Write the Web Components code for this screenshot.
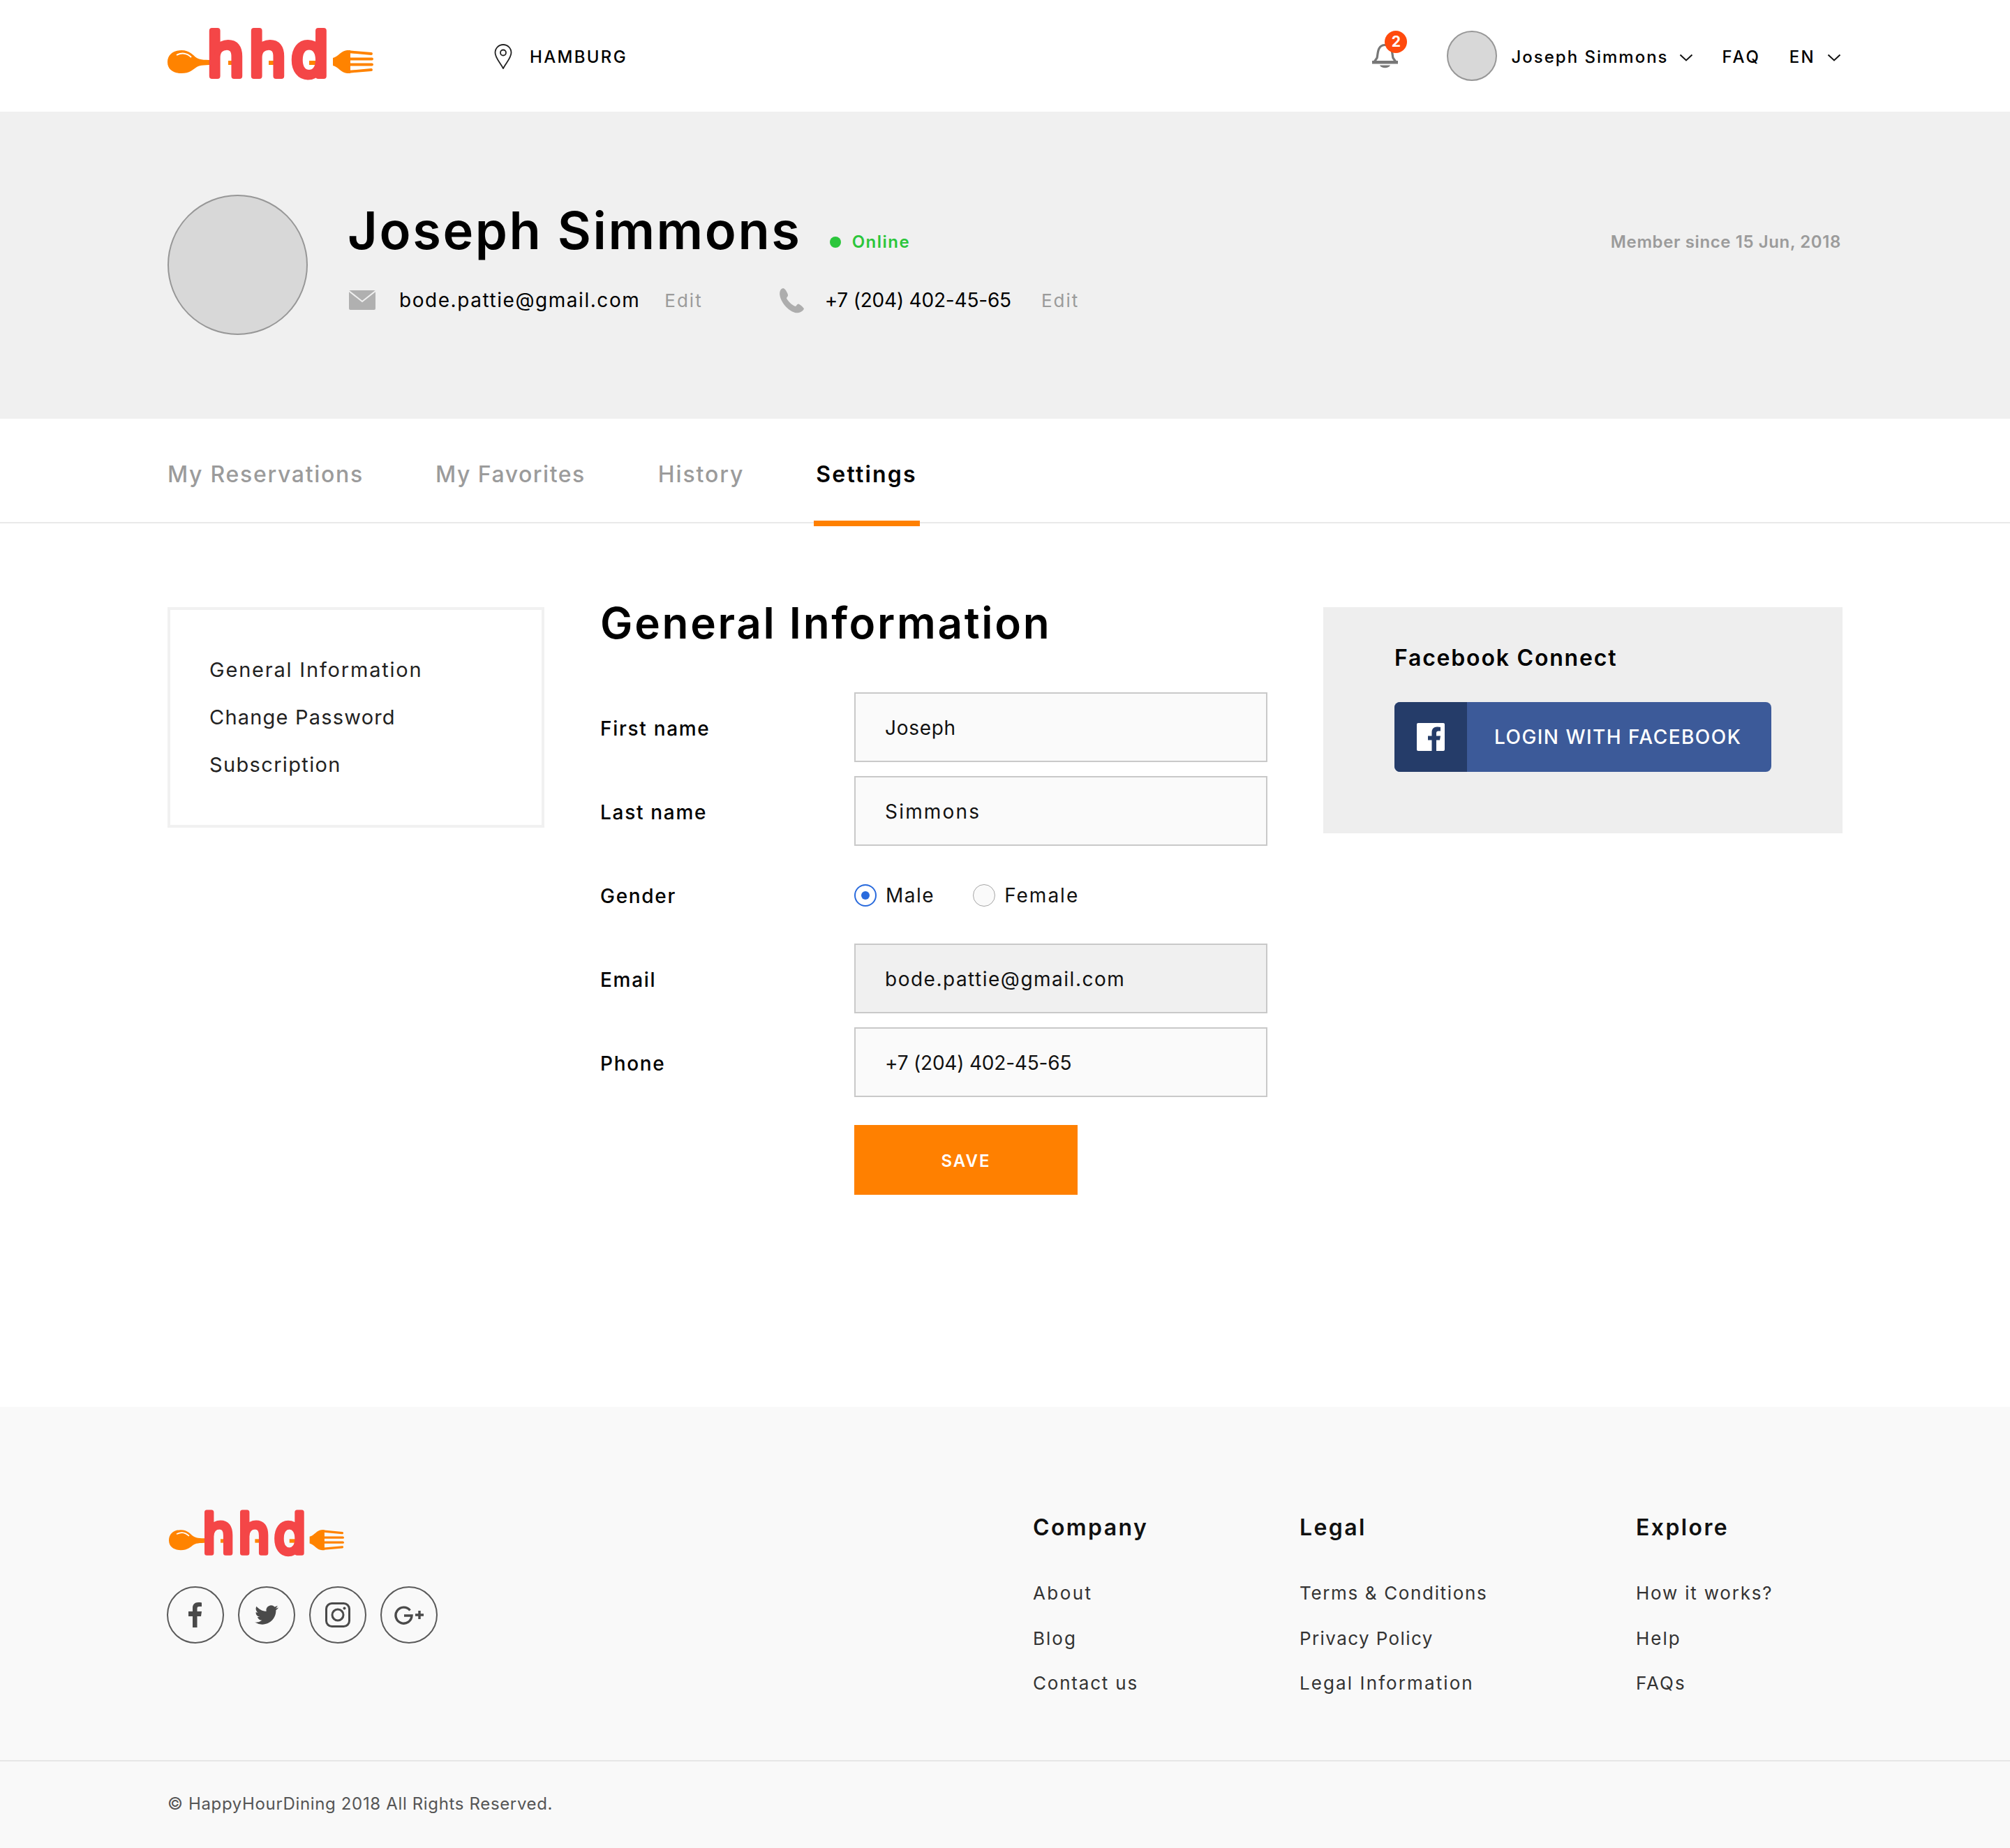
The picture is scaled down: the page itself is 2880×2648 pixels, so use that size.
<!DOCTYPE html>
<html lang="en">
<head>
<meta charset="utf-8">
<title>Settings</title>
<style>
    html, body { margin: 0; background: #fff; }
    body { font-family: Inter, "Liberation Sans", sans-serif; color: #000; width: 2880px; }
</style>
</head>
<body>
<site-header></site-header>
<profile-banner></profile-banner>
<account-tabs></account-tabs>
<settings-page>
    <settings-menu slot="menu"></settings-menu>
    <general-form slot="form"></general-form>
    <fb-connect slot="aside"></fb-connect>
</settings-page>
<site-footer></site-footer>

<script>
class HhdLogo extends HTMLElement {
    connectedCallback() {
        const ancho = this.getAttribute("ancho") || 295;
        const alto = this.getAttribute("alto") || 75;
        this.attachShadow({ mode: "open" }).innerHTML = `
            <style>:host { display: block; line-height: 0; } svg { overflow: visible; }</style>
            <svg width="${ancho}" height="${alto}" viewBox="0 0 295 75" preserveAspectRatio="none">
                <path fill="#ff8300" d="M0 49C0 38 9 32 20 32C32 32 36 39 42 43C47 46 54 46 70 46V53C54 53 47 53 42 56C36 60 32 65 20 65C9 65 0 60 0 49Z"/>
                <path fill="none" stroke="#fff" stroke-width="2" d="M13 39C20 35 28 36 34 42"/>
                <rect x="87" y="47" width="14" height="6" fill="#ff8300"/>
                <rect x="145" y="47" width="16" height="6" fill="#ff8300"/>
                <rect x="203" y="47" width="12" height="6" fill="#ff8300"/>
                <!-- la palabra sigue siendo texto: el trazo grueso le da las puntas redondas -->
                <text x="56 116 177" y="69" font-family="'DejaVu Sans', sans-serif" font-weight="400" font-size="86"
                    fill="#f44647" stroke="#f44647" stroke-width="8" stroke-linejoin="round">hhd</text>
                <path fill="#ff8300" d="M237 43C245 41 249 32 258 32H262V65H258C249 65 245 56 237 54Z"/>
                <g stroke="#ff8300" stroke-width="3.800" stroke-linecap="round">
                    <path d="M258 34L292 37"/><path d="M258 44.500H293"/><path d="M258 52.500H293"/><path d="M258 63L292 60"/>
                </g>
            </svg>
        `;
    }
}
customElements.define("hhd-logo", HhdLogo);

class SiteHeader extends HTMLElement {
    connectedCallback() {
        const chevron = `<svg class="chev" width="20" height="11" viewBox="0 0 20 11"><path d="M1.500 1.500L10 9.500L18.500 1.500" fill="none" stroke="#111" stroke-width="2"/></svg>`;
        this.attachShadow({ mode: "open" }).innerHTML = `
            <style>
                :host { display: flex; align-items: center; height: 160px; padding: 2px 242px 0 240px; box-sizing: border-box; background: #fff; font-size: 24px; font-weight: 500; }
                hhd-logo { margin-top: -7px; }
                .ciudad { display: flex; align-items: center; gap: 25px; margin-left: 173px; letter-spacing: 2.300px; }
                .derecha { display: flex; align-items: center; margin-left: auto; }
                .campana { position: relative; width: 37px; height: 36px; margin-right: 70px; margin-top: -2px; }
                .badge { position: absolute; left: 18px; top: -18px; width: 32px; height: 32px; border-radius: 50%; background: #ff4a0d; color: #fff; font-size: 21px; font-weight: 700; line-height: 32px; text-align: center; }
                .avatar { width: 72px; height: 72px; box-sizing: border-box; border-radius: 50%; background: #d8d8d8; border: 2px solid #979797; margin-right: 20px; margin-top: -2px; }
                .usuario { letter-spacing: 2px; }
                .chev { display: block; margin-top: 3px; }
                .faq { margin-left: 42px; letter-spacing: 2.900px; }
                .idioma { margin-left: 41px; letter-spacing: 2.300px; margin-right: 17px; }
            </style>
            <hhd-logo></hhd-logo>
            <div class="ciudad">
                <svg width="26" height="36" viewBox="0 0 26 36"><path d="M13 35C9 27 1.500 20 1.500 12.500C1.500 6 6.500 1 13 1S24.500 6 24.500 12.500C24.500 20 17 27 13 35Z" fill="none" stroke="#222" stroke-width="1.800"/><circle cx="13" cy="12.500" r="4" fill="none" stroke="#222" stroke-width="1.800"/></svg>
                <span>HAMBURG</span>
            </div>
            <div class="derecha">
                <div class="campana">
                    <svg width="37" height="36" viewBox="0 0 37 36"><path d="M3.500 26L7 21C8.500 16 7 2.500 18.500 2.500S28.500 16 30 21L33.500 26" fill="none" stroke="#777" stroke-width="3.200"/><rect x="0" y="25" width="37" height="4.500" fill="#777"/><path d="M11 31.500C13 36.500 24 36.500 26 31.500Z" fill="#777"/></svg>
                    <div class="badge">2</div>
                </div>
                <div class="avatar"></div>
                <span class="usuario">Joseph Simmons</span>
                <span style="margin-left:15px">${chevron}</span>
                <span class="faq">FAQ</span>
                <span class="idioma">EN</span>
                ${chevron}
            </div>
        `;
    }
}
customElements.define("site-header", SiteHeader);

class ProfileBanner extends HTMLElement {
    connectedCallback() {
        this.attachShadow({ mode: "open" }).innerHTML = `
            <style>
                :host { display: flex; gap: 60px; box-sizing: border-box; height: 440px; padding: 119px 242px 0 240px; background: #f0f0f0; }
                .avatar { flex: none; width: 201px; height: 201px; box-sizing: border-box; border-radius: 50%; background: #d8d8d8; border: 2px solid #979797; }
                .info { flex: 1; padding-top: 7px; margin-left: -1px; }
                .nombre { display: flex; align-items: flex-start; height: 88px; }
                h1 { margin: 0 0 0 -2px; font-size: 74px; line-height: 88px; font-weight: 600; letter-spacing: 2.600px; }
                .online { display: flex; align-items: center; margin: 46px 0 0 40px; color: #2bc63b; font-size: 24px; line-height: 30px; font-weight: 600; letter-spacing: 1.500px; }
                .punto { width: 16px; height: 16px; border-radius: 50%; background: #2bc63b; margin-right: 16px; }
                .desde { margin: 46px 0 0 auto; color: #9b9b9b; font-size: 24px; line-height: 30px; font-weight: 600; letter-spacing: .6px; }
                .contacto { display: flex; align-items: center; height: 40px; margin-top: 36px; font-size: 28px; }
                .editar { color: #9b9b9b; font-size: 26px; letter-spacing: 2px; margin-left: 35px; }
            </style>
            <div class="avatar"></div>
            <div class="info">
                <div class="nombre">
                    <h1>Joseph Simmons</h1>
                    <div class="online"><span class="punto"></span><span>Online</span></div>
                    <div class="desde">Member since 15 Jun, 2018</div>
                </div>
                <div class="contacto">
                    <svg width="38" height="28" viewBox="0 0 38 28"><rect width="38" height="28" rx="2" fill="#b0b0b0"/><path d="M0 1L19 16L38 1" fill="none" stroke="#f0f0f0" stroke-width="2"/></svg>
                    <span style="margin-left:34px;letter-spacing:1.550px">bode.pattie@gmail.com</span>
                    <span class="editar">Edit</span>
                    <svg style="margin-left:109px" width="37" height="37" viewBox="0 0 37 37"><path d="M6 1C2 2 .5 6 1.500 12C3 20 11 32 23 36C28 37 34 35 36 30.500C35 28 30 24 28 23.500C26 23.500 25 27 23.500 27C18 25 13 19 11 15.500C11 14 13.500 12.500 13 10.500C12.500 8 9 1 6 1Z" fill="#adadad"/></svg>
                    <span style="margin-left:29px;letter-spacing:-.2px">+7 (204) 402-45-65</span>
                    <span class="editar" style="margin-left:43px">Edit</span>
                </div>
            </div>
        `;
    }
}
customElements.define("profile-banner", ProfileBanner);

class AccountTabs extends HTMLElement {
    connectedCallback() {
        this.attachShadow({ mode: "open" }).innerHTML = `
            <style>
                :host { display: flex; box-sizing: border-box; height: 150px; padding: 60px 240px 0; border-bottom: 2px solid #e9e9e9; font-size: 32px; line-height: 40px; font-weight: 500; color: #9b9b9b; }
                span { position: relative; letter-spacing: 1.700px; margin-right: 103px; white-space: nowrap; }
                .activo { color: #000; letter-spacing: 2.200px; font-weight: 600; }
                .activo::after { content: ""; position: absolute; left: -3px; right: -4px; top: 86px; height: 8px; background: #ff8000; }
            </style>
            <span>My Reservations</span>
            <span style="letter-spacing:1.500px;margin-right:104px">My Favorites</span>
            <span style="letter-spacing:1.900px">History</span>
            <span class="activo">Settings</span>
        `;
    }
}
customElements.define("account-tabs", AccountTabs);

class SettingsPage extends HTMLElement {
    connectedCallback() {
        this.attachShadow({ mode: "open" }).innerHTML = `
            <style>
                :host { display: grid; grid-template-columns: 540px 956px 744px; column-gap: 80px; align-items: start; box-sizing: border-box; height: 1266px; padding: 120px 240px 0; }
            </style>
            <slot name="menu"></slot>
            <slot name="form"></slot>
            <slot name="aside"></slot>
        `;
    }
}
customElements.define("settings-page", SettingsPage);

class SettingsMenu extends HTMLElement {
    connectedCallback() {
        this.attachShadow({ mode: "open" }).innerHTML = `
            <style>
                :host { display: block; box-sizing: border-box; height: 316px; padding: 52px 56px 0; border: 4px solid #f1f1f1; font-size: 29px; line-height: 68px; letter-spacing: 1.800px; color: #222; }
                div:first-child { color: #000; }
            </style>
            <div>General Information</div>
            <div style="letter-spacing:1.200px">Change Password</div>
            <div style="letter-spacing:1.350px">Subscription</div>
        `;
    }
}
customElements.define("settings-menu", SettingsMenu);

class FormField extends HTMLElement {
    connectedCallback() {
        const etiqueta = this.getAttribute("etiqueta");
        this.attachShadow({ mode: "open" }).innerHTML = `
            <style>
                :host { display: grid; grid-template-columns: 364px 592px; align-items: center; height: 100px; font-size: 28px; letter-spacing: 1.500px; }
                .etiqueta { font-weight: 500; letter-spacing: 1.700px; padding-top: 3px; }
                .caja { display: flex; align-items: center; height: 100px; box-sizing: border-box; padding: 2px 0 0 42px; border: 2px solid #c9c9c9; background: #fafafa; color: #111; }
                :host([apagado]) .caja { background: #f0f0f0; }
                .libre { display: flex; align-items: center; padding-top: 2px; }
            </style>
            <div class="etiqueta">${etiqueta}</div>
            ${this.hasAttribute("libre") ? `<div class="libre"><slot></slot></div>` : `<div class="caja"><slot></slot></div>`}
        `;
    }
}
customElements.define("form-field", FormField);

class RadioOption extends HTMLElement {
    connectedCallback() {
        this.attachShadow({ mode: "open" }).innerHTML = `
            <style>
                :host { display: flex; align-items: center; gap: 13px; letter-spacing: 2px; color: #111; }
                .circulo { width: 32px; height: 32px; box-sizing: border-box; border-radius: 50%; border: 1px solid #a5a5a5; background: #fafafa; display: flex; align-items: center; justify-content: center; }
                :host([marcado]) .circulo { border: 2px solid #2a6bdd; background: #fff; }
                :host([marcado]) .circulo::after { content: ""; width: 12px; height: 12px; border-radius: 50%; background: #2a6bdd; }
            </style>
            <span class="circulo"></span>
            <span><slot></slot></span>
        `;
    }
}
customElements.define("radio-option", RadioOption);

class GeneralForm extends HTMLElement {
    connectedCallback() {
        this.attachShadow({ mode: "open" }).innerHTML = `
            <style>
                :host { display: block; }
                h2 { margin: -13px 0 63px; font-size: 62px; line-height: 72px; font-weight: 600; letter-spacing: 2.700px; }
                .campos { display: flex; flex-direction: column; gap: 20px; }
                .opciones { display: flex; gap: 55px; }
                button { display: block; width: 320px; height: 100px; margin: 40px 0 0 364px; padding: 2px 0 0; border: 0; background: #ff8000; color: #fff; font: 600 24px Inter, "Liberation Sans", sans-serif; letter-spacing: 2px; }
            </style>
            <h2>General Information</h2>
            <div class="campos">
                <form-field etiqueta="First name" style="letter-spacing:.7px">Joseph</form-field>
                <form-field etiqueta="Last name" style="letter-spacing:2.200px">Simmons</form-field>
                <form-field etiqueta="Gender" libre>
                    <div class="opciones">
                        <radio-option marcado style="letter-spacing:1.500px">Male</radio-option>
                        <radio-option>Female</radio-option>
                    </div>
                </form-field>
                <form-field etiqueta="Email" apagado>bode.pattie@gmail.com</form-field>
                <form-field etiqueta="Phone" style="letter-spacing:-.2px">+7 (204) 402-45-65</form-field>
            </div>
            <button>SAVE</button>
        `;
    }
}
customElements.define("general-form", GeneralForm);

class FbConnect extends HTMLElement {
    connectedCallback() {
        this.attachShadow({ mode: "open" }).innerHTML = `
            <style>
                :host { display: block; box-sizing: border-box; height: 324px; padding: 48px 0 0 102px; background: #eee; }
                h3 { margin: 0 0 38px; font-size: 32px; line-height: 50px; font-weight: 600; letter-spacing: 1.800px; }
                .boton { display: flex; width: 540px; height: 100px; border-radius: 8px; overflow: hidden; background: #3c5a99; color: #fff; font-size: 28px; font-weight: 500; }
                .marca { flex: none; display: flex; align-items: center; justify-content: center; width: 104px; background: #253c69; }
                .rotulo { display: flex; align-items: center; padding-left: 39px; letter-spacing: 1.450px; }
            </style>
            <h3>Facebook Connect</h3>
            <div class="boton">
                <div class="marca">
                    <svg width="40" height="40" viewBox="0 0 40 40"><rect width="40" height="40" rx="2" fill="#fff"/><path d="M28 40V24.500H33L34 18.500H28V14.500C28 12.500 29 11.500 31 11.500H34V6C33 5.800 31 5.600 29 5.600C24.500 5.600 21.500 8.500 21.500 13.500V18.500H16V24.500H21.500V40Z" fill="#253c69"/></svg>
                </div>
                <div class="rotulo">LOGIN WITH FACEBOOK</div>
            </div>
        `;
    }
}
customElements.define("fb-connect", FbConnect);

class SocialLink extends HTMLElement {
    connectedCallback() {
        this.attachShadow({ mode: "open" }).innerHTML = `
            <style>
                :host { display: flex; align-items: center; justify-content: center; width: 82px; height: 82px; box-sizing: border-box; border-radius: 50%; border: 2px solid #5a5a5a; }
            </style>
            <slot></slot>
        `;
    }
}
customElements.define("social-link", SocialLink);

class SiteFooter extends HTMLElement {
    connectedCallback() {
        // cada enlace lleva su propio espaciado para igualar el ancho
        const columna = (titulo, enlaces) => `
            <div class="columna">
                <h4>${titulo}</h4>
                ${enlaces.map(([texto, ls]) => `<div style="letter-spacing:${ls}px">${texto}</div>`).join("")}
            </div>`;
        this.attachShadow({ mode: "open" }).innerHTML = `
            <style>
                :host { display: block; box-sizing: border-box; height: 632px; background: #f9f9f9; color: #333; }
                .arriba { display: grid; grid-template-columns: 1240px 382px 482px 1fr; box-sizing: border-box; height: 506px; padding: 148px 240px 0; }
                .marca { display: flex; flex-direction: column; gap: 43px; }
                .marca hhd-logo { margin-left: 2px; }
                .redes { display: flex; gap: 20px; margin-left: -1px; }
                .columna { font-size: 26px; line-height: 64.500px; }
                h4 { margin: 2px 0 39px; font-size: 32px; line-height: 46px; font-weight: 600; letter-spacing: 2.400px; color: #111; }
                .abajo { display: flex; align-items: center; box-sizing: border-box; height: 126px; padding: 0 240px 4px; border-top: 2px solid #e6e6e6; font-size: 24px; color: #555; letter-spacing: .65px; }
            </style>
            <div class="arriba">
                <div class="marca">
                    <hhd-logo ancho="251" alto="66"></hhd-logo>
                    <div class="redes">
                        <social-link><svg width="20" height="36" viewBox="0 0 20 36"><path d="M6 36V20H0V13H6V8C6 3 9 0 14 0C16 0 18 .2 19 .4V6H15.500C13 6 12.500 7.200 12.500 9V13H19L18 20H12.500V36Z" fill="#4a4a4a"/></svg></social-link>
                        <social-link><svg width="34" height="28" viewBox="0 0 24 20"><path transform="translate(0 -2)" d="M23.953 4.570a10 10 0 01-2.825.775 4.958 4.958 0 002.163-2.723c-.951.555-2.005.959-3.127 1.184a4.920 4.920 0 00-8.384 4.482C7.690 8.095 4.067 6.130 1.640 3.162a4.822 4.822 0 00-.666 2.475c0 1.710.870 3.213 2.188 4.096a4.904 4.904 0 01-2.228-.616v.060a4.923 4.923 0 003.946 4.827 4.996 4.996 0 01-2.212.085 4.936 4.936 0 004.604 3.417 9.867 9.867 0 01-6.102 2.105c-.390 0-.779-.023-1.170-.067a13.995 13.995 0 007.557 2.209c9.053 0 13.998-7.496 13.998-13.985 0-.210 0-.420-.015-.630A9.935 9.935 0 0024 4.590z" fill="#4a4a4a"/></svg></social-link>
                        <social-link><svg width="36" height="36" viewBox="0 0 36 36"><rect x="1.500" y="1.500" width="33" height="33" rx="8" fill="none" stroke="#4a4a4a" stroke-width="3"/><circle cx="18" cy="18" r="8" fill="none" stroke="#4a4a4a" stroke-width="3"/><circle cx="27.500" cy="8.500" r="2" fill="#4a4a4a"/></svg></social-link>
                        <social-link><svg width="42" height="28" viewBox="0 0 42 28"><path d="M22.500 7.500A11.500 11.500 0 1 0 25 15H14" fill="none" stroke="#4a4a4a" stroke-width="3.400"/><path d="M30 14H42M36 8V20" stroke="#4a4a4a" stroke-width="3.400"/></svg></social-link>
                    </div>
                </div>
                ${columna("Company", [["About", 2.4], ["Blog", 2], ["Contact us", 1.8]])}
                ${columna("Legal", [["Terms &amp; Conditions", 1.65], ["Privacy Policy", 1.4], ["Legal Information", 2.1]])}
                ${columna("Explore", [["How it works?", 1.8], ["Help", 2], ["FAQs", 2]])}
            </div>
            <div class="abajo">© HappyHourDining 2018 All Rights Reserved.</div>
        `;
    }
}
customElements.define("site-footer", SiteFooter);
</script>
</body>
</html>
